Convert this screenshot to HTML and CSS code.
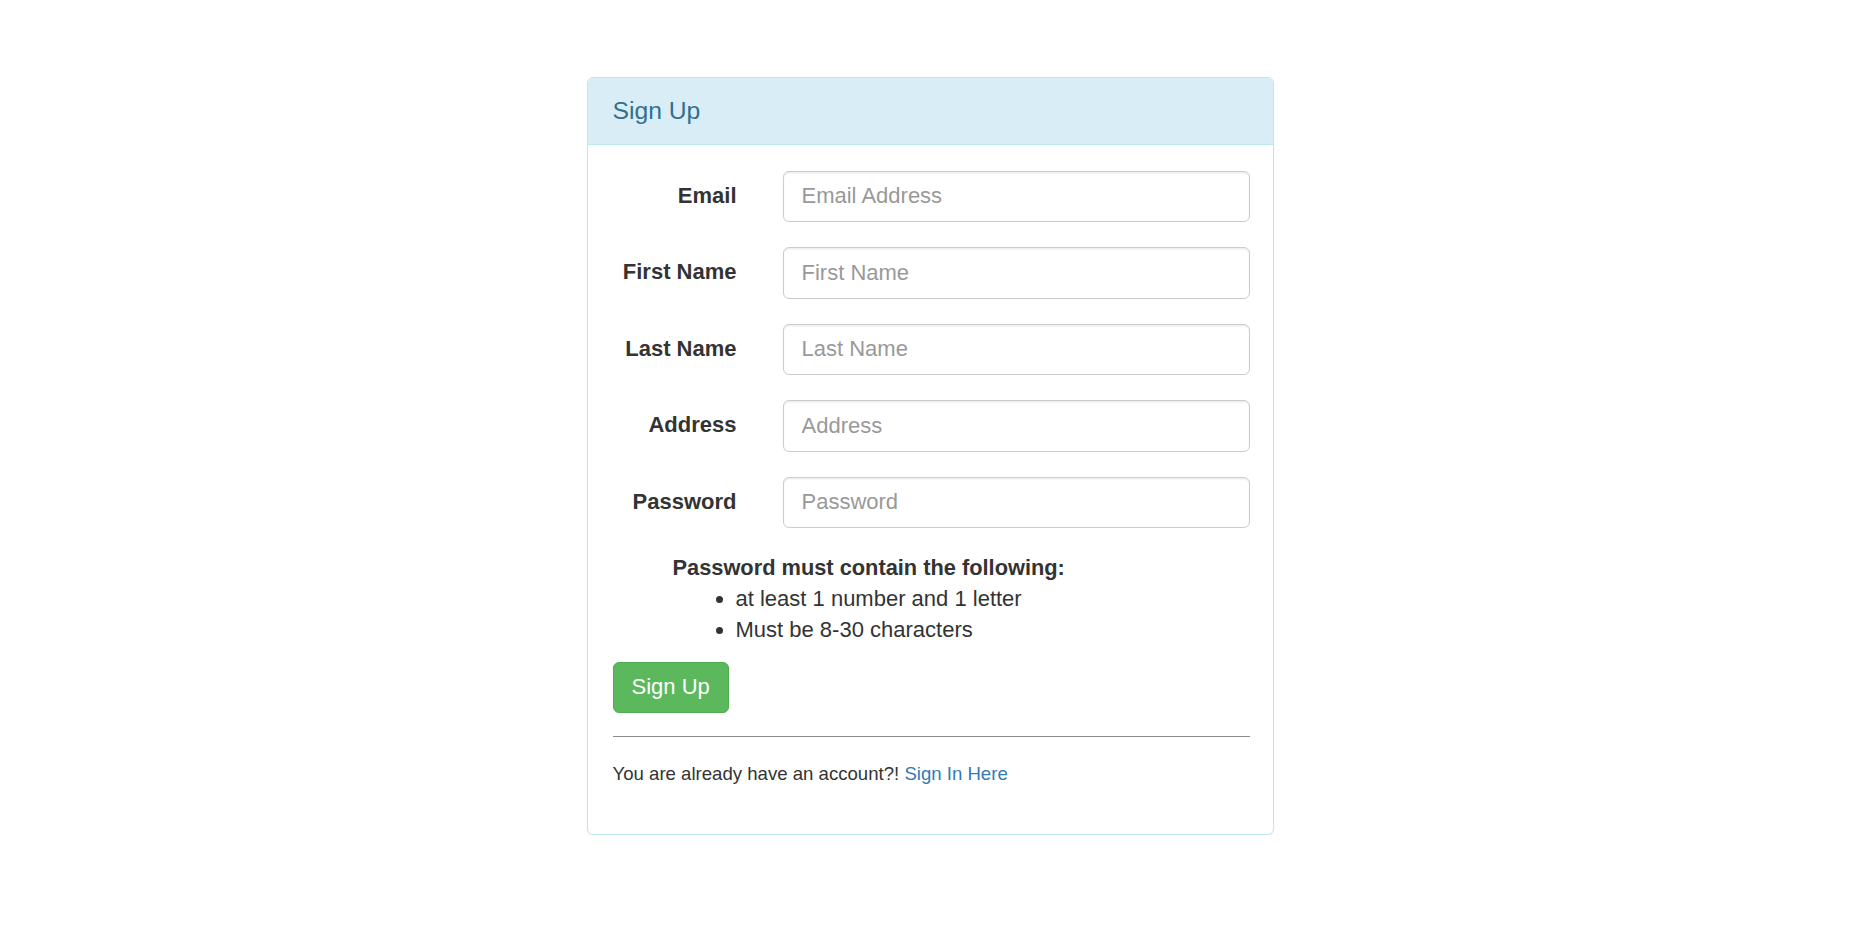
FILE: index.html
```html
<!DOCTYPE html>
<html lang="en">
<head>
<meta charset="utf-8">
<title>Sign Up</title>
<link rel="stylesheet" href="styles.css">
</head>
<body>
<div class="panel">
  <div class="panel-heading">
    <h3 class="panel-title">Sign Up</h3>
  </div>
  <div class="panel-body">
    <form class="form">
      <div class="form-row">
        <label class="form-label" for="email">Email</label>
        <input class="form-input" id="email" type="text" placeholder="Email Address">
      </div>
      <div class="form-row">
        <label class="form-label" for="first">First Name</label>
        <input class="form-input" id="first" type="text" placeholder="First Name">
      </div>
      <div class="form-row">
        <label class="form-label" for="last">Last Name</label>
        <input class="form-input" id="last" type="text" placeholder="Last Name">
      </div>
      <div class="form-row">
        <label class="form-label" for="address">Address</label>
        <input class="form-input" id="address" type="text" placeholder="Address">
      </div>
      <div class="form-row form-row-last">
        <label class="form-label" for="password">Password</label>
        <input class="form-input" id="password" type="password" placeholder="Password">
      </div>
      <div class="rules">
        <div class="rules-title">Password must contain the following:</div>
        <ul class="rules-list">
          <li>at least 1 number and 1 letter</li>
          <li>Must be 8-30 characters</li>
        </ul>
      </div>
      <button class="btn-success" type="button">Sign Up</button>
    </form>
    <hr class="divider">
    <p class="footnote">You are already have an account?! <a class="link" href="#">Sign In Here</a></p>
  </div>
</div>
</body>
</html>
```

FILE: styles.css
```css
html, body {
  margin: 0;
  padding: 0;
  background: #ffffff;
}
body {
  font-family: "Liberation Sans", Arial, Helvetica, sans-serif;
  font-size: 22px;
  line-height: 30px;
  color: #333333;
}
.panel {
  width: 687px;
  box-sizing: border-box;
  margin: 77px auto 0;
  border: 1px solid #bce8f1;
  border-radius: 6px;
  background: #ffffff;
  box-shadow: 0 1px 2px rgba(0, 0, 0, 0.05);
}
.panel-heading {
  background: #d9edf7;
  color: #31708f;
  border-bottom: 1px solid #bce8f1;
  border-radius: 5px 5px 0 0;
  padding: 20px 22.5px 20px 25px;
  height: 26px;
}
.panel-title {
  margin: 0;
  font-size: 24.7px;
  font-weight: normal;
  line-height: 26px;
}
.panel-body {
  padding: 25.5px 22.5px 47.5px 25px;
}
.form {
  margin: 0;
}
.form-row {
  display: flex;
  align-items: flex-start;
  gap: 46px;
  margin-bottom: 25px;
}
.form-row-last {
  margin-bottom: 24px;
}
.form-label {
  width: 124px;
  flex: none;
  text-align: right;
  font-weight: bold;
  padding-top: 10px;
  line-height: 30px;
}
.form-input {
  flex: 1;
  min-width: 0;
  height: 51.5px;
  box-sizing: border-box;
  padding: 9px 18px;
  font-family: inherit;
  font-size: 22px;
  line-height: 30px;
  color: #555555;
  background: #ffffff;
  border: 1px solid #cccccc;
  border-radius: 6px;
  box-shadow: inset 0 1.5px 1.5px rgba(0, 0, 0, 0.075);
  outline: none;
}
.form-input::placeholder {
  color: #999999;
  opacity: 1;
}
.rules {
  margin-left: 60px;
  line-height: 31px;
}
.rules-title {
  font-weight: bold;
  font-size: 21.8px;
}
.rules-list {
  margin: 0;
  padding-left: 63px;
}
.btn-success {
  display: block;
  margin-top: 16.5px;
  height: 51px;
  box-sizing: border-box;
  padding: 9px 18px;
  font-family: inherit;
  font-size: 22px;
  line-height: 30px;
  color: #ffffff;
  background: #5cb85c;
  border: 1px solid #4cae4c;
  border-radius: 6px;
  cursor: pointer;
}
.divider {
  margin: 23.7px 0 0;
  border: 0;
  border-top: 1px solid #8c8c8c;
  height: 0;
}
.footnote {
  margin: 23.5px 0 0;
  font-size: 18.6px;
  line-height: 25.7px;
}
.link {
  color: #337ab7;
  text-decoration: none;
}
```
